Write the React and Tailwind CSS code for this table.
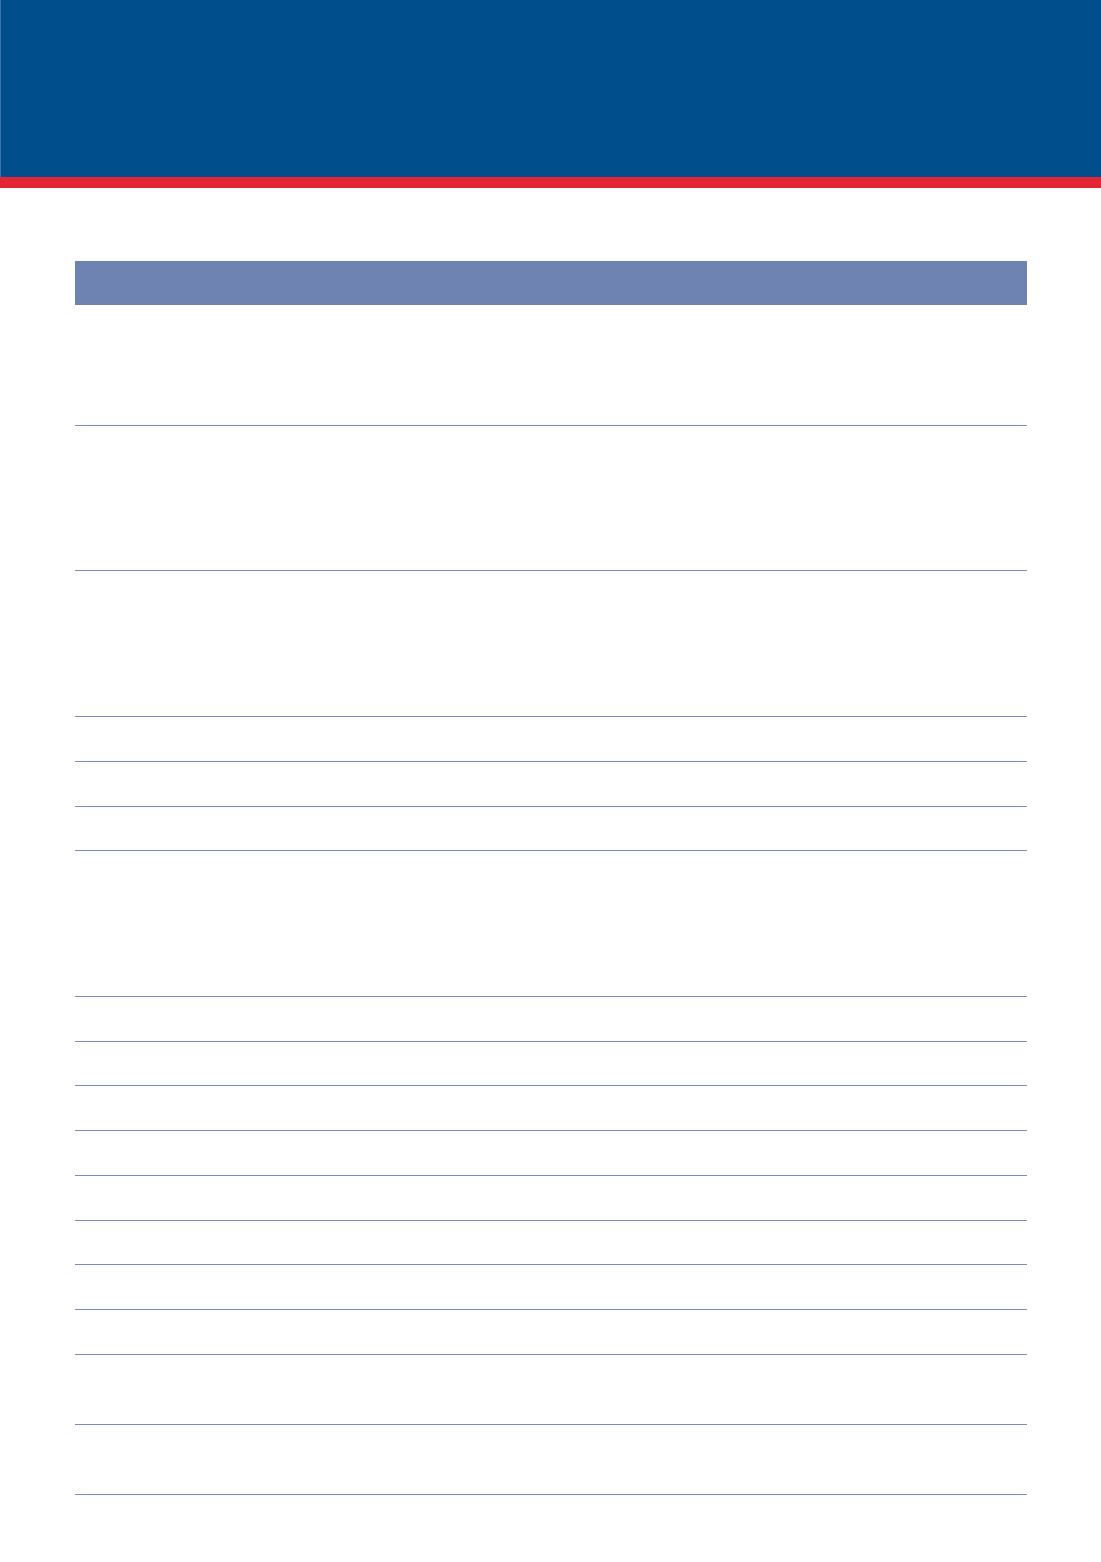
export default function App() {
  const rows = [121, 145, 146, 45, 45, 44, 146, 45, 44, 45, 45, 45, 44, 45, 45, 70, 70];
  const hClass = {
    121: "h-[121px]",
    145: "h-[145px]",
    146: "h-[146px]",
    45: "h-[45px]",
    44: "h-[44px]",
    70: "h-[70px]",
  };
  return (
    <div className="w-[1101px] h-[1562px] bg-white font-['Liberation_Sans',sans-serif]">
      <div className="h-[177px] bg-[#004e8c] border-l border-[#3a73a8]" />
      <div className="h-[11px] bg-[#e32434]" />
      <div className="pt-[73px] px-[75px] w-[1102px]">
        <div className="w-[952px]">
          <div className="h-[44px] bg-[#6f83b3]" />
          {rows.map((h, i) => (
            <div key={i} className={`${hClass[h]} border-b border-[#7b8cc2]`} />
          ))}
        </div>
      </div>
    </div>
  );
}
